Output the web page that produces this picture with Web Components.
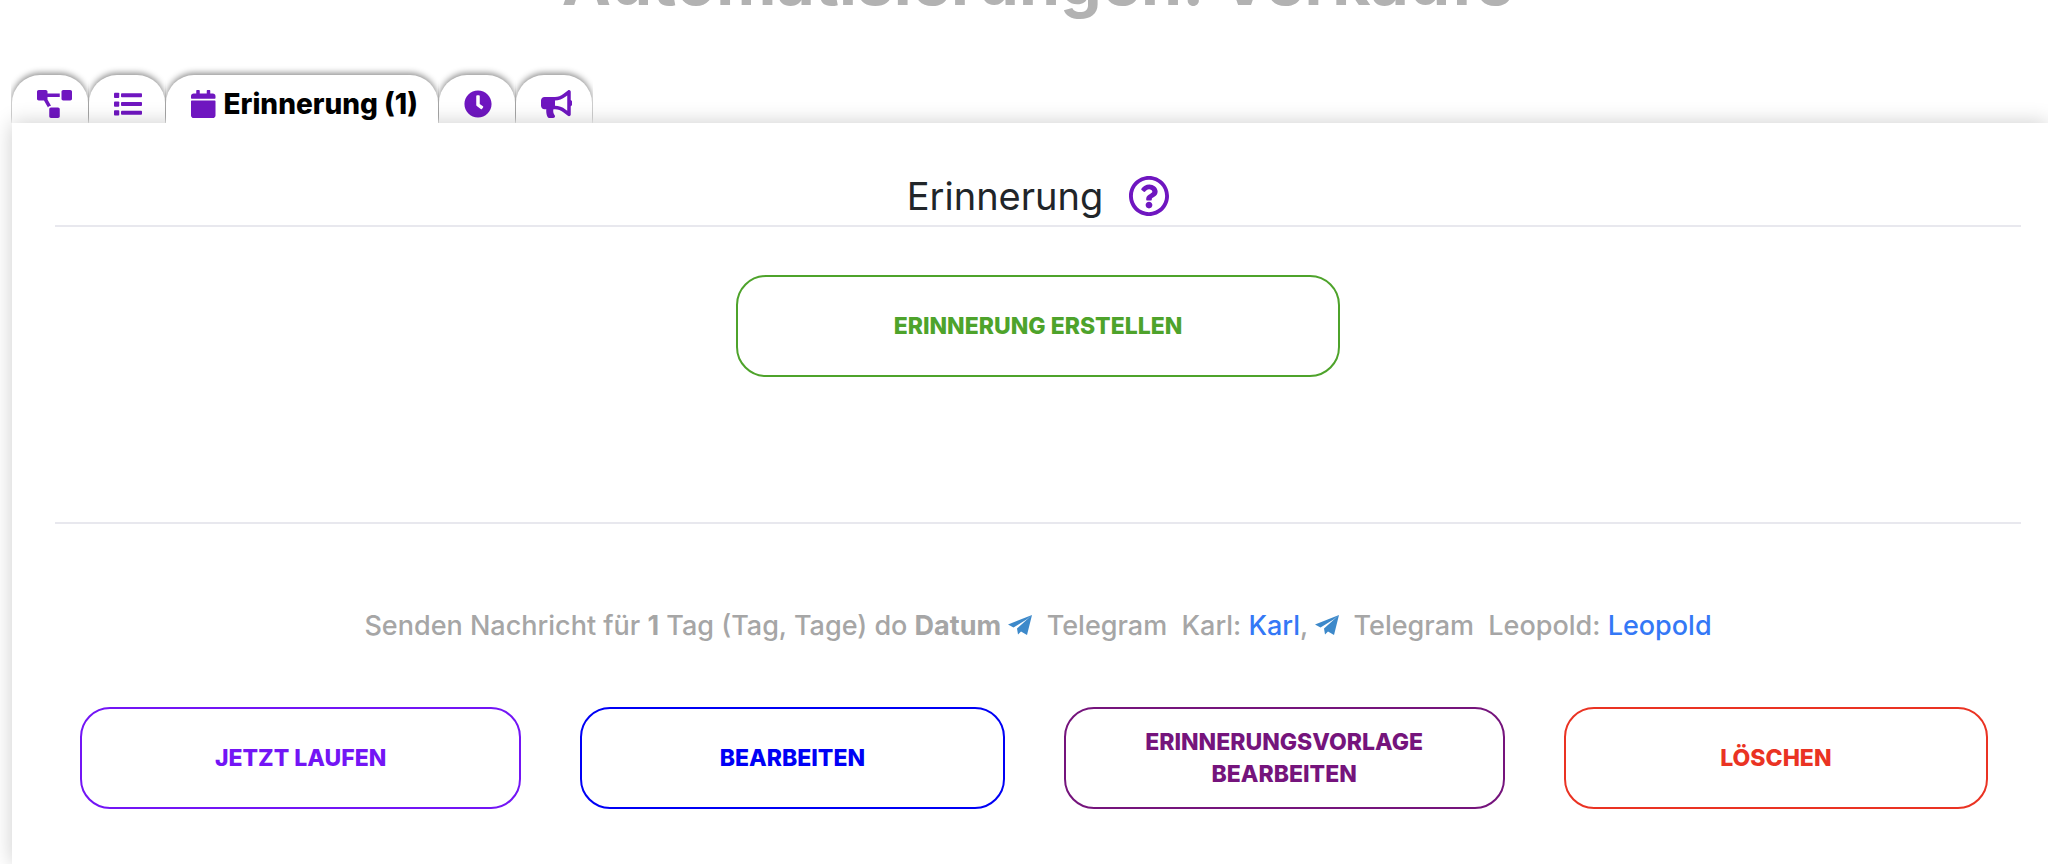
<!DOCTYPE html>
<html lang="de">
<head>
<meta charset="utf-8">
<title>Automatisierungen</title>
<style>
  body {
    margin: 0;
    background: #fff;
    font-family: Inter, "Liberation Sans", sans-serif;
    color: #212529;
    overflow-x: hidden;
  }
</style>
</head>
<body>
<automation-page></automation-page>

<script>
const icons = {
  diagram: ['0 0 640 512', '<path d="M384 320H256c-17.67 0-32 14.33-32 32v128c0 17.67 14.33 32 32 32h128c17.67 0 32-14.33 32-32V352c0-17.67-14.33-32-32-32zM192 32c0-17.67-14.33-32-32-32H32C14.33 0 0 14.33 0 32v128c0 17.67 14.33 32 32 32h95.72l73.16 128.04C211.98 300.98 232.4 288 256 288h.28L192 175.51V128h224V64H192V32zM608 0H480c-17.67 0-32 14.33-32 32v128c0 17.67 14.33 32 32 32h128c17.67 0 32-14.33 32-32V32c0-17.67-14.33-32-32-32z"/>'],
  list: ['0 0 512 512', '<rect y="48" width="96" height="96" rx="16"/><rect y="208" width="96" height="96" rx="16"/><rect y="368" width="96" height="96" rx="16"/><rect x="128" y="60" width="384" height="72" rx="16"/><rect x="128" y="220" width="384" height="72" rx="16"/><rect x="128" y="380" width="384" height="72" rx="16"/>'],
  calendar: ['0 0 448 512', '<path d="M12 192h424c6.6 0 12 5.4 12 12v260c0 26.5-21.5 48-48 48H48c-26.5 0-48-21.5-48-48V204c0-6.6 5.4-12 12-12zm436-44v-36c0-26.5-21.5-48-48-48h-48V12c0-6.6-5.4-12-12-12h-40c-6.6 0-12 5.4-12 12v52H160V12c0-6.6-5.4-12-12-12h-40c-6.6 0-12 5.4-12 12v52H48C21.5 64 0 85.5 0 112v36c0 6.6 5.4 12 12 12h424c6.6 0 12-5.4 12-12z"/>'],
  clock: ['0 0 512 512', '<path d="M256,8C119,8,8,119,8,256S119,504,256,504,504,393,504,256,393,8,256,8Zm92.49,313h0l-20,25a16,16,0,0,1-22.49,2.5h0l-67-49.72a40,40,0,0,1-15-31.23V112a16,16,0,0,1,16-16h32a16,16,0,0,1,16,16V256l58,42.5A16,16,0,0,1,348.49,321Z"/>'],
  bullhorn: ['0 0 576 512', '<path d="M576 240c0-23.63-12.95-44.04-32-55.12V32.01C544 23.26 537.02 0 512 0c-7.12 0-14.19 2.38-19.98 7.02l-85.03 68.03C364.28 109.19 310.66 128 256 128H64c-35.35 0-64 28.65-64 64v96c0 35.35 28.65 64 64 64h33.7c-1.39 10.48-2.18 21.14-2.18 32 0 39.77 9.26 77.35 25.56 110.94 5.19 10.69 16.52 17.06 28.4 17.06h74.28c26.05 0 41.69-29.84 25.9-50.56-16.4-21.52-26.15-48.36-26.15-77.44 0-11.11 1.62-21.79 4.41-32H256c54.66 0 108.28 18.81 150.98 52.95l85.03 68.03a32.023 32.023 0 0 0 19.98 7.02c24.92 0 32-22.78 32-32V295.13C563.05 284.04 576 263.63 576 240zm-96 141.42l-33.05-26.44C392.95 311.78 325.12 288 256 288v-96c69.12 0 136.95-23.78 190.95-66.98L480 98.58v282.84z"/>'],
  help: ['8 8 496 496', '<path d="M256 8C119.043 8 8 119.083 8 256c0 136.997 111.043 248 248 248s248-111.003 248-248C504 119.083 392.957 8 256 8zm0 448c-110.532 0-200-89.431-200-200 0-110.495 89.472-200 200-200 110.491 0 200 89.471 200 200 0 110.53-89.431 200-200 200zm107.244-255.2c0 67.052-72.421 68.084-72.421 92.863V300c0 6.627-5.373 12-12 12h-45.647c-6.627 0-12-5.373-12-12v-8.659c0-35.745 27.1-50.034 47.579-61.516 17.561-9.845 28.324-16.541 28.324-29.579 0-17.246-21.999-28.693-39.784-28.693-23.189 0-33.894 10.977-48.942 29.969-4.057 5.12-11.46 6.071-16.666 2.124l-27.824-21.098c-5.107-3.872-6.251-11.066-2.644-16.363C184.846 131.491 214.94 112 261.794 112c49.071 0 101.45 38.304 101.45 88.8zM298 368c0 23.159-18.841 42-42 42s-42-18.841-42-42 18.841-42 42-42 42 18.841 42 42z"/>'],
  plane: ['0 0 24 20', '<path d="M24 0 0 9.5 5.5 12.5 18.5 4.5zM24 0 9 13.5 10 19.5 13 16.5 19 20z"/>']
};

class AppIcon extends HTMLElement {
  constructor() {
    super();
    this.attachShadow({ mode: 'open' });
  }
  connectedCallback() {
    const [box, shape] = icons[this.getAttribute('name')];
    this.shadowRoot.innerHTML = `
      <style>
        :host { display: inline-block; height: 28px; color: #6f16c0; }
        svg { display: block; height: 100%; fill: currentColor; }
      </style>
      <svg viewBox="${box}" aria-hidden="true">${shape}</svg>
    `;
  }
}
customElements.define('app-icon', AppIcon);

class AppTab extends HTMLElement {
  constructor() {
    super();
    this.attachShadow({ mode: 'open' });
    this.shadowRoot.innerHTML = `
      <style>
        :host { display: block; min-width: 76px; }
        :host([active]) { position: relative; z-index: 2; }
        button {
          display: flex;
          align-items: center;
          gap: 8px;
          width: 100%;
          height: 48px;
          padding: 10px 16px 0 25px;
          border: 0;
          border-radius: 28px 28px 0 0;
          background: #fff;
          box-shadow: 0 -2px 6px rgba(0, 0, 0, 0.45);
          color: #000;
          font: 800 28px/34px Inter, "Liberation Sans", sans-serif;
          clip-path: inset(-12px -1px 0 -1px);
        }
        :host([active]) button { padding-right: 20px; }
      </style>
      <button type="button" role="tab"><slot></slot></button>
    `;
  }
  connectedCallback() {
    const button = this.shadowRoot.querySelector('button');
    button.setAttribute('aria-selected', this.hasAttribute('active'));
    button.setAttribute('aria-label', this.getAttribute('label'));
  }
}
customElements.define('app-tab', AppTab);

class ActionButton extends HTMLElement {
  constructor() {
    super();
    this.attachShadow({ mode: 'open' });
    this.shadowRoot.innerHTML = `
      <style>
        :host { display: block; }
        button {
          width: 100%;
          min-height: 102px;
          padding: 7px 64px;
          border: 2px solid currentColor;
          border-radius: 30px;
          background: #fff;
          color: inherit;
          font: 800 23px/32px Inter, "Liberation Sans", sans-serif;
          text-transform: uppercase;
        }
      </style>
      <button type="button"><slot></slot></button>
    `;
  }
}
customElements.define('action-button', ActionButton);

class ReminderPanel extends HTMLElement {
  constructor() {
    super();
    this.attachShadow({ mode: 'open' });
    this.shadowRoot.innerHTML = `
      <style>
        :host {
          display: block;
          position: relative;
          z-index: 1;
          flex: 1;
          padding: 49px 27px 0 43px;
          background: #fff;
          box-shadow: 0 0 20px rgba(0, 0, 0, 0.2);
        }
        header {
          display: flex;
          align-items: center;
          justify-content: center;
          gap: 26px;
          padding-bottom: 5px;
          border-bottom: 2px solid #e8e8ee;
        }
        h2 { margin: 0; font-size: 38px; font-weight: 400; line-height: 48px; }
        header app-icon { height: 40px; }
        .create {
          padding: 48px 0 145px;
          border-bottom: 2px solid #e8e8ee;
        }
        .create action-button { width: 604px; margin: 0 auto; color: #4ea32b; }
        .message {
          margin: 84px 0 63px;
          color: #a6a6a6;
          font-size: 27px;
          font-weight: 500;
          line-height: 36px;
          text-align: center;
        }
        .message app-icon { height: 20px; color: #3d89ca; }
        a { color: #3478f6; text-decoration: none; }
        .actions {
          display: grid;
          grid-template-columns: 26fr 25fr 26fr 25fr;
          gap: 59px;
          padding: 0 33px 55px 25px;
        }
        .run { color: #7315f5; }
        .edit { color: #0000f5; }
        .template { color: #75147c; }
        .delete { color: #ea3323; }
      </style>
      <header><h2>Erinnerung</h2><app-icon name="help"></app-icon></header>
      <div class="create"><action-button>Erinnerung erstellen</action-button></div>
      <p class="message">Senden Nachricht für <b>1</b> Tag (Tag, Tage) do <b>Datum</b> <app-icon name="plane"></app-icon>&nbsp; Telegram&nbsp; Karl: <a href="#karl">Karl</a>, <app-icon name="plane"></app-icon>&nbsp; Telegram&nbsp; Leopold: <a href="#leopold">Leopold</a></p>
      <div class="actions">
        <action-button class="run">Jetzt laufen</action-button>
        <action-button class="edit">Bearbeiten</action-button>
        <action-button class="template">Erinnerungsvorlage bearbeiten</action-button>
        <action-button class="delete">Löschen</action-button>
      </div>
    `;
  }
}
customElements.define('reminder-panel', ReminderPanel);

class AutomationPage extends HTMLElement {
  constructor() {
    super();
    this.attachShadow({ mode: 'open' });
    this.shadowRoot.innerHTML = `
      <style>
        :host {
          display: flex;
          flex-direction: column;
          box-sizing: border-box;
          min-height: 100vh;
          padding-left: 12px;
          overflow: hidden;
        }
        /* page title, scrolled almost out of view */
        h1 {
          margin: -59px 0 54px;
          padding-left: 16px;
          color: #b2b2b2;
          font-size: 66px;
          font-weight: 700;
          line-height: 80px;
          text-align: center;
        }
        nav { display: flex; gap: 1px; }
      </style>
      <h1>Automatisierungen: Verkäufe</h1>
      <nav role="tablist">
        <app-tab label="Diagramm"><app-icon name="diagram"></app-icon></app-tab>
        <app-tab label="Liste"><app-icon name="list"></app-icon></app-tab>
        <app-tab label="Erinnerung (1)" active><app-icon name="calendar"></app-icon>Erinnerung (1)</app-tab>
        <app-tab label="Zeitplan"><app-icon name="clock"></app-icon></app-tab>
        <app-tab label="Kampagne"><app-icon name="bullhorn"></app-icon></app-tab>
      </nav>
      <reminder-panel></reminder-panel>
    `;
  }
}
customElements.define('automation-page', AutomationPage);
</script>
</body>
</html>
